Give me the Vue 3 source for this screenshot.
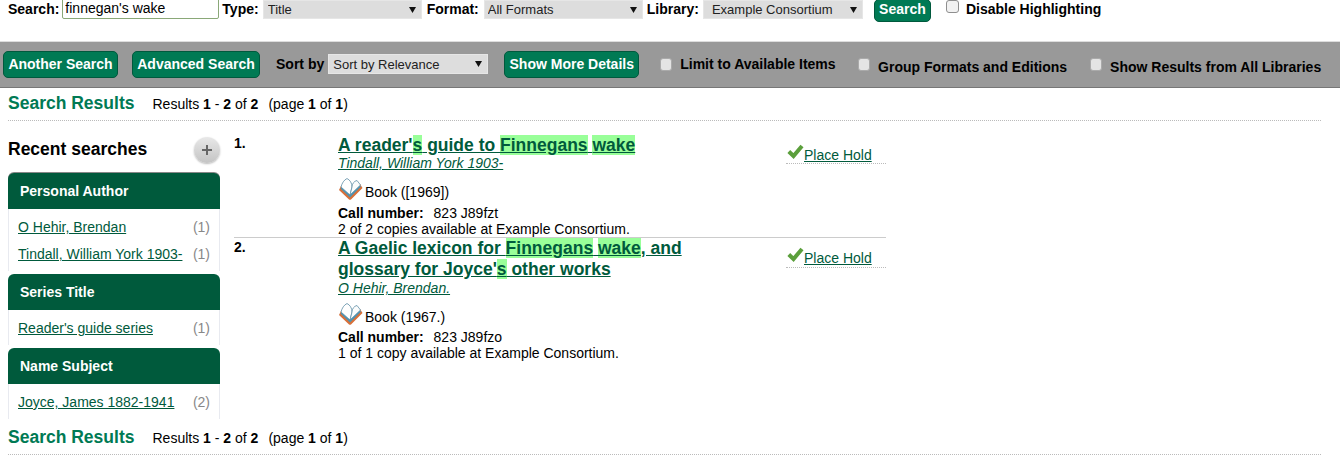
<script setup>
const selects = [
  { label: 'Type:', value: 'Title', cls: 'sel-type' },
  { label: 'Format:', value: 'All Formats', cls: 'sel-format' },
  { label: 'Library:', value: 'Example Consortium', cls: 'sel-lib' }
]
const groups = [
  { title: 'Personal Author', items: [['O Hehir, Brendan', 1], ['Tindall, William York 1903-', 1]] },
  { title: 'Series Title', items: [["Reader's guide series", 1]] },
  { title: 'Name Subject', items: [['Joyce, James 1882-1941', 2]] }
]
</script>

<template>
  <div class="page">
    <form class="top" @submit.prevent>
      <label class="lab lab-search">Search:</label>
      <input class="q" value="finnegan's wake" />
      <template v-for="s in selects" :key="s.label">
        <label class="lab">{{ s.label }}</label>
        <select class="sel" :class="s.cls"><option>{{ s.value }}</option></select>
      </template>
      <button class="btn btn-search">Search</button>
      <input type="checkbox" class="cb cb-top" />
      <span class="lab">Disable Highlighting</span>
    </form>

    <div class="bar">
      <button class="btn btn-bar">Another Search</button>
      <button class="btn btn-bar">Advanced Search</button>
      <span class="lab sort">Sort by</span>
      <select class="sel sel-sort"><option>Sort by Relevance</option></select>
      <button class="btn btn-bar btn-more">Show More Details</button>
      <input type="checkbox" class="cb cb-bar cb-limit" />
      <span class="lab opt">Limit to Available Items</span>
      <input type="checkbox" class="cb cb-bar cb-group" />
      <span class="lab opt low">Group Formats and Editions</span>
      <input type="checkbox" class="cb cb-bar cb-all" />
      <span class="lab opt low">Show Results from All Libraries</span>
    </div>

    <div class="rhead">
      <span class="rtitle">Search Results</span>
      <span class="rcount">Results <b>1</b> - <b>2</b> of <b>2</b></span>
      <span class="rpage">(page <b>1</b> of <b>1</b>)</span>
    </div>

    <div class="main">
      <aside class="side">
        <div class="recent">
          <span>Recent searches</span>
          <span class="plus">
            <svg width="12" height="12" viewBox="0 0 12 12"><path d="M6 1v10M1 6h10" stroke="#666" stroke-width="2" fill="none" /></svg>
          </span>
        </div>
        <section v-for="g in groups" :key="g.title" class="group">
          <h3 class="ghead">{{ g.title }}</h3>
          <div class="gbody">
            <div v-for="it in g.items" :key="it[0]" class="gitem">
              <a href="#" class="link">{{ it[0] }}</a>
              <span class="num">({{ it[1] }})</span>
            </div>
          </div>
        </section>
      </aside>

      <div class="results">
        <article class="rec rec1">
          <b class="idx">1.</b>
          <div class="body">
            <a href="#" class="link title">A reader'<mark>s</mark> guide to <mark>Finnegans</mark> <mark>wake</mark></a>
            <a href="#" class="link author">Tindall, William York 1903-</a>
            <div class="fmt">
              <svg class="book" width="25" height="24" viewBox="0 0 25 24">
                <path d="M1 13 L3 9 L12 17 L22 7 L24.5 11 L13 22.5 Q12 23 11 22.5 Z" fill="#d8703a" />
                <path d="M2.5 11.5 L12 20.5 L23 9.5 L21 7.5 L12 16.5 L4 9 Z" fill="#4a94b4" />
                <path d="M3 10 C4 6 6 3 9 1.5 C12 3 14 6 14 10 L12 18 Z" fill="#fff" stroke="#5f8ea6" stroke-width="0.8" />
                <path d="M14 10 C14 7 16 4 19 3.5 L22.5 8 L12 18 Z" fill="#fbfcfc" stroke="#5f8ea6" stroke-width="0.8" />
              </svg>
              <span>Book ([1969])</span>
            </div>
            <div class="call"><b>Call number:</b><span>823 J89fzt</span></div>
            <div class="avail">2 of 2 copies available at Example Consortium.</div>
          </div>
          <div class="hold">
            <svg class="check" width="17" height="15" viewBox="0 0 17 15"><path d="M1.8 7.5 L6.5 12 L15 2" stroke="#5b9f3c" stroke-width="4" fill="none" /></svg>
            <a href="#" class="link">Place Hold</a>
          </div>
        </article>
        <article class="rec rec2">
          <b class="idx">2.</b>
          <div class="body">
            <a href="#" class="link title">A Gaelic lexicon for <mark>Finnegans</mark> <mark>wake</mark>, and<br />glossary for Joyce'<mark>s</mark> other works</a>
            <a href="#" class="link author">O Hehir, Brendan.</a>
            <div class="fmt">
              <svg class="book" width="25" height="24" viewBox="0 0 25 24">
                <path d="M1 13 L3 9 L12 17 L22 7 L24.5 11 L13 22.5 Q12 23 11 22.5 Z" fill="#d8703a" />
                <path d="M2.5 11.5 L12 20.5 L23 9.5 L21 7.5 L12 16.5 L4 9 Z" fill="#4a94b4" />
                <path d="M3 10 C4 6 6 3 9 1.5 C12 3 14 6 14 10 L12 18 Z" fill="#fff" stroke="#5f8ea6" stroke-width="0.8" />
                <path d="M14 10 C14 7 16 4 19 3.5 L22.5 8 L12 18 Z" fill="#fbfcfc" stroke="#5f8ea6" stroke-width="0.8" />
              </svg>
              <span>Book (1967.)</span>
            </div>
            <div class="call"><b>Call number:</b><span>823 J89fzo</span></div>
            <div class="avail">1 of 1 copy available at Example Consortium.</div>
          </div>
          <div class="hold">
            <svg class="check" width="17" height="15" viewBox="0 0 17 15"><path d="M1.8 7.5 L6.5 12 L15 2" stroke="#5b9f3c" stroke-width="4" fill="none" /></svg>
            <a href="#" class="link">Place Hold</a>
          </div>
        </article>
      </div>
    </div>

    <div class="rhead rfoot">
      <span class="rtitle">Search Results</span>
      <span class="rcount">Results <b>1</b> - <b>2</b> of <b>2</b></span>
      <span class="rpage">(page <b>1</b> of <b>1</b>)</span>
    </div>
  </div>
</template>

<style>
html, body { margin: 0; background: #fff; overflow: hidden; }
</style>

<style scoped>
.page {
  width: 1340px;
  height: 471px;
  overflow: hidden;
  font-family: "Liberation Sans", Arial, sans-serif;
  font-size: 14px;
  color: #000;
}
.top {
  display: flex;
  align-items: flex-start;
  height: 41px;
  padding-left: 8px;
  margin: 0;
  box-sizing: border-box;
}
.lab { font-weight: 700; font-size: 14px; line-height: 18px; white-space: nowrap; }
.q {
  width: 157px;
  height: 22px;
  margin: -3px 3px 0 3px;
  padding: 0 2px;
  box-sizing: border-box;
  border: 1px solid #8aa878;
  border-radius: 2px;
  font: 14px "Liberation Sans", Arial, sans-serif;
  outline: none;
}
.sel {
  appearance: none;
  height: 19px;
  border: 1px solid #e6e6e6;
  background-color: #ddd;
  background-image: url("data:image/svg+xml,%3Csvg xmlns='http://www.w3.org/2000/svg' width='7' height='6'%3E%3Cpath d='M0 0H7L3.5 6Z' fill='%23111'/%3E%3C/svg%3E");
  background-repeat: no-repeat;
  background-position: right 5px center;
  font: 13px "Liberation Sans", Arial, sans-serif;
  color: #222;
  padding: 0 0 0 3px;
  box-sizing: border-box;
  border-radius: 0;
}
.top .sel { margin: 0 5px 0 4px; }
.sel-type { width: 159px; }
.sel-format { width: 159px; }
.top .sel-type { padding-left: 4px; }
.top .sel-format { margin-left: 5px; margin-right: 4px; }
.top .sel-lib { width: 160px; padding-left: 8px; margin-left: 4px; margin-right: 0; }
.btn {
  font: 700 14px "Liberation Sans", Arial, sans-serif;
  color: #fff;
  background: #007a54;
  border: 1px solid #00593d;
  border-radius: 5px;
  white-space: nowrap;
  padding: 0 4px;
  box-sizing: border-box;
}
.btn-search { width: 57px; height: 23px; margin: -1px 15px 0 11px; padding-bottom: 3px; }
.cb {
  appearance: none;
  width: 13px;
  height: 13px;
  margin: 0;
  box-sizing: border-box;
  border-radius: 3px;
  background: #f2f2f2;
  border: 1px solid #8f8f8f;
  flex: none;
}
.cb-top { margin: 0 7px 0 0; }
.bar {
  display: flex;
  align-items: center;
  height: 47px;
  box-sizing: border-box;
  padding: 0 0 1px 3px;
  background: #999;
  border-top: 1px solid #ddd;
  border-bottom: 1px solid #777;
}
.btn-bar { height: 27px; margin-right: 14px; padding-bottom: 1px; }
.btn-bar:first-child { width: 115px; }
.btn-bar:nth-child(2) { width: 128px; margin-right: 16px; }
.sort { margin-right: 4px; }
.sel-sort { width: 160px; margin-right: 16px; height: 20px; padding-left: 4px; }
.btn-more { width: 135px; margin-right: 21px; }
.cb-bar { background: #e4e4e4; border: 1px solid #aaa; width: 12px; height: 13px; }
.cb-limit { margin-right: 8px; }
.opt { margin-top: -1px; }
.low { margin-top: 5px; }
.cb-group { margin-left: 22px; margin-right: 8.5px; }
.cb-all { margin-left: 23px; margin-right: 8px; }
.rhead {
  display: flex;
  align-items: baseline;
  height: 33px;
  padding-top: 4px;
  margin: 0 19px 0 8px;
  box-sizing: border-box;
  border-bottom: 1px dotted #bbb;
  line-height: 22px;
}
.rtitle { font-size: 17.5px; font-weight: 700; color: #007a54; width: 144.5px; }
.rpage { margin-left: 10px; }
.main { display: flex; height: 298px; overflow: hidden; }
.side { width: 212px; margin-left: 8px; flex: none; }
.recent {
  display: flex;
  justify-content: space-between;
  align-items: center;
  height: 52px;
  font-size: 17.5px;
  font-weight: 700;
  box-sizing: border-box;
  padding-top: 5px;
}
.plus {
  width: 26px;
  height: 26px;
  border-radius: 50%;
  background: linear-gradient(#e8e8e8, #c4c4c4);
  box-shadow: 0 1px 2px #bbb;
  display: flex;
  align-items: center;
  justify-content: center;
}
.group { margin-bottom: 3px; }
.ghead {
  margin: 0;
  height: 36px;
  line-height: 36px;
  padding-left: 12px;
  background: #005a3c;
  color: #fff;
  font-size: 14px;
  font-weight: 700;
  border-radius: 6px 6px 0 0;
}
.group:first-of-type .ghead { box-shadow: 0 -1px 0 #888; }
.gbody {
  border-left: 1px solid #e8eaf0;
  border-right: 1px solid #e8eaf0;
  padding: 5px 9px 3px;
}
.gitem {
  display: flex;
  justify-content: space-between;
  height: 27px;
  line-height: 26px;
}
.link { color: #005a3c; text-decoration: underline; }
.num { color: #888; }
.results { width: 652px; margin-left: 14px; flex: none; }
.rec { display: flex; }
.rec1 { height: 117px; border-bottom: 1px solid #ccc; box-sizing: border-box; }
.idx { width: 104px; padding-top: 14px; flex: none; line-height: 16px; }
.body { width: 449px; flex: none; line-height: 15px; }
.title {
  display: block;
  font-size: 17.5px;
  font-weight: 700;
  line-height: 21px;
  padding-top: 14px;
}
.rec2 .title { padding-top: 0; }
.rec2 .idx { padding-top: 1px; }
mark { background: #99ff99; color: inherit; }
.author { display: block; font-style: italic; line-height: 17px; margin-top: -1px; }
.rec2 .author { margin-top: 0; }
.fmt { display: flex; align-items: flex-end; height: 26px; margin-top: 3px; line-height: 17px; }
.book { margin-right: 2px; flex: none; }
.call { margin-top: 5px; line-height: 15px; }
.rec2 .call { margin-top: 4px; }
.call b { margin-right: 10px; }
.avail { margin-top: 1px; }
.hold {
  display: flex;
  align-items: flex-end;
  height: 20px;
  margin-top: 22px;
  width: 100px;
  margin-left: -1px;
  border-bottom: 1px dotted #bbb;
  line-height: 15px;
}
.rec2 .hold { margin-top: 9px; line-height: 17px; }
.check { margin: 0 0 4px 1px; flex: none; }
.rec2 .check { margin-bottom: 5px; }
.rfoot { padding-top: 7px; height: 36px; }
</style>
